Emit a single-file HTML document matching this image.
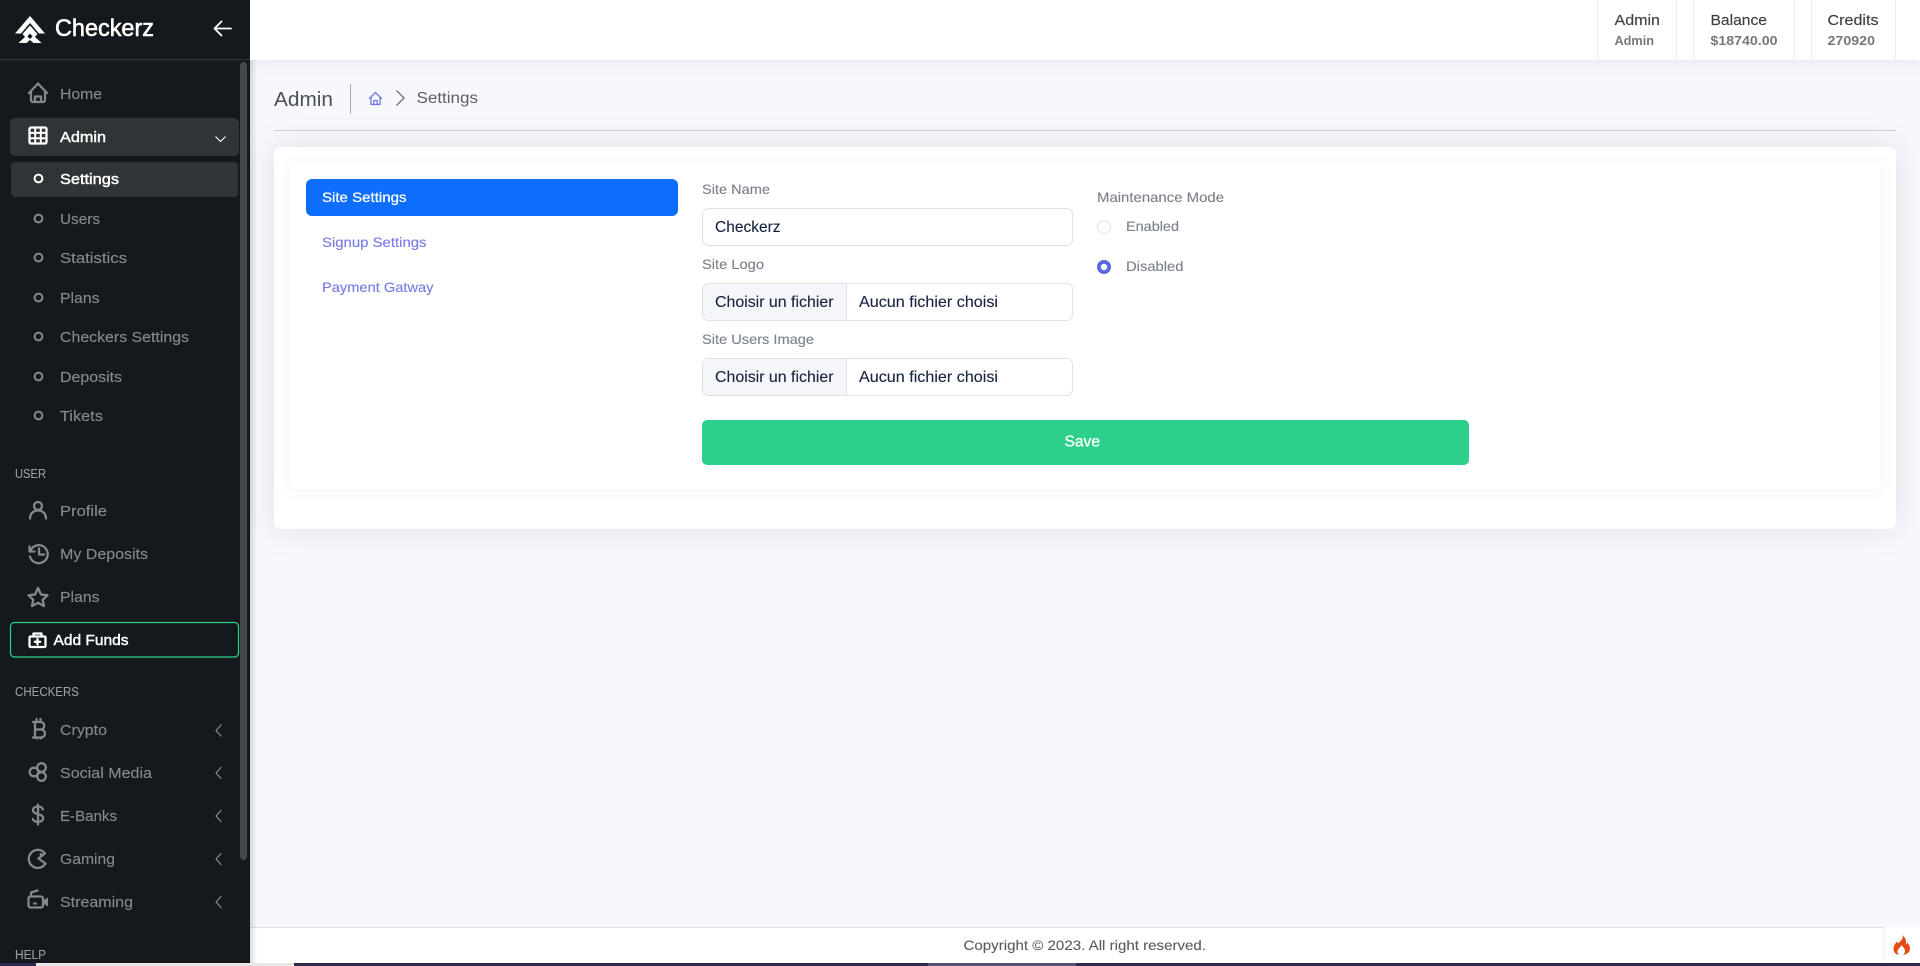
<!DOCTYPE html>
<html lang="en">
<head>
<meta charset="utf-8">
<title>Checkerz - Settings</title>
<style>
html,body{margin:0;padding:0;width:1920px;height:966px;overflow:hidden;background:#f7f8fd}
svg{display:block}
text{font-family:"Liberation Sans",sans-serif;white-space:pre}
.nav{font-size:15px;fill:#84888c;stroke:#84888c;stroke-width:.15}
.act{font-size:15px;fill:#fff;stroke:#fff;stroke-width:.45}
.sec{font-size:13px;fill:#9a9da0;stroke:#9a9da0;stroke-width:.1}
.lbl{font-size:14px;fill:#7a818a;stroke:#7a818a;stroke-width:.12}
.val{font-size:16px;fill:#17243f;stroke:#17243f;stroke-width:.12}
.tab{font-size:14px;fill:#767ae6;stroke:#767ae6;stroke-width:.12}
.hd{font-size:15px;fill:#3f3f3f;stroke:#3f3f3f;stroke-width:.15}
.sm{font-size:13px;fill:#777;font-weight:bold}
.ic{fill:none;stroke:#84888c;stroke-width:2.300;stroke-linecap:round;stroke-linejoin:round}
.wi{fill:none;stroke:#fff;stroke-width:2.300;stroke-linecap:round;stroke-linejoin:round}
.ch{fill:none;stroke:#84888c;stroke-width:1.300;stroke-linecap:round;stroke-linejoin:round}
</style>
</head>
<body>
<svg xmlns="http://www.w3.org/2000/svg" width="1920" height="966" viewBox="0 0 1920 966">
<defs>
<filter id="s1" x="-5%" y="-25%" width="110%" height="150%"><feDropShadow dx="0" dy="0" stdDeviation="16" flood-color="#1a2040" flood-opacity=".09"/></filter>
<filter id="s2" x="-5%" y="-20%" width="110%" height="140%"><feDropShadow dx="0" dy="0" stdDeviation="8" flood-color="#1a2040" flood-opacity=".05"/></filter>
<filter id="s3" x="-5%" y="-100%" width="110%" height="300%"><feDropShadow dx="0" dy="2" stdDeviation="8" flood-color="#1a2040" flood-opacity=".08"/></filter>
<linearGradient id="sd" x1="0" x2="1" y1="0" y2="0"><stop offset="0" stop-color="#000" stop-opacity=".14"/><stop offset="1" stop-color="#000" stop-opacity="0"/></linearGradient>
</defs>

<!-- page background -->
<rect width="1920" height="966" fill="#f7f8fd"/>

<!-- top bar -->
<rect x="250" y="0" width="1670" height="60" fill="#fff" filter="url(#s3)"/>
<g stroke="#eeeeee" stroke-width="1">
<path d="M1597.5 0V60M1676.5 0V60M1693.5 0V60M1794.5 0V60M1811.5 0V60M1895.5 0V60"/>
</g>
<text class="hd" x="1614.5" y="25" textLength="45.5" lengthAdjust="spacingAndGlyphs">Admin</text>
<text class="sm" x="1614.5" y="45" textLength="39.5" lengthAdjust="spacingAndGlyphs">Admin</text>
<text class="hd" x="1710.5" y="25" textLength="56.5" lengthAdjust="spacingAndGlyphs">Balance</text>
<text class="sm" x="1710.5" y="45" textLength="67" lengthAdjust="spacingAndGlyphs">$18740.00</text>
<text class="hd" x="1827.5" y="25" textLength="51" lengthAdjust="spacingAndGlyphs">Credits</text>
<text class="sm" x="1827.5" y="45" textLength="47.5" lengthAdjust="spacingAndGlyphs">270920</text>

<!-- breadcrumb -->
<text x="274" y="106" font-size="20" fill="#4a4f55" textLength="59" lengthAdjust="spacingAndGlyphs">Admin</text>
<rect x="350" y="84" width="1" height="30" fill="#b3abab"/>
<path d="M369.5 98.5L375.5 92.5L381.5 98.5M371 97.500V104.500H380V97.500M373.800 104.500V100.500H377.200V104.500" fill="none" stroke="#6f78e0" stroke-width="1.300" stroke-linejoin="round" stroke-linecap="round"/>
<path d="M396.5 90.5L404 98L396.5 105.5" fill="none" stroke="#5a5f65" stroke-width="1.200"/>
<text x="416.5" y="103" font-size="16" fill="#5a5f65" textLength="61.5" lengthAdjust="spacingAndGlyphs">Settings</text>
<rect x="274" y="130" width="1622" height="1" fill="#cfd0d6"/>

<!-- outer + inner card -->
<rect x="274" y="147" width="1622" height="382" rx="7" fill="#fff" filter="url(#s1)"/>
<rect x="290" y="163" width="1590" height="326" rx="6" fill="#fff" filter="url(#s2)"/>

<!-- tabs -->
<rect x="306" y="179" width="372" height="37" rx="6" fill="#0d6efd"/>
<text x="322" y="202" font-size="14" fill="#fff" stroke="#fff" stroke-width=".25" textLength="84.5" lengthAdjust="spacingAndGlyphs">Site Settings</text>
<text class="tab" x="322" y="247" textLength="104.5" lengthAdjust="spacingAndGlyphs">Signup Settings</text>
<text class="tab" x="322" y="292" textLength="111.5" lengthAdjust="spacingAndGlyphs">Payment Gatway</text>

<!-- form -->
<text class="lbl" x="702" y="194" textLength="68" lengthAdjust="spacingAndGlyphs">Site Name</text>
<rect x="702.5" y="208.5" width="370" height="37" rx="6" fill="#fff" stroke="#dfe2ea"/>
<text class="val" x="715" y="232" textLength="65.5" lengthAdjust="spacingAndGlyphs">Checkerz</text>

<text class="lbl" x="702" y="269" textLength="62" lengthAdjust="spacingAndGlyphs">Site Logo</text>
<path d="M846.5 283.5H708.5a6 6 0 0 0-6 6v25a6 6 0 0 0 6 6H846.5z" fill="#f5f6f9"/>
<rect x="702.5" y="283.5" width="370" height="37" rx="6" fill="none" stroke="#dfe2ea"/>
<path d="M846.5 284V320" stroke="#dfe2ea"/>
<text class="val" x="715" y="307" textLength="118.5" lengthAdjust="spacingAndGlyphs">Choisir un fichier</text>
<text class="val" x="859" y="307" textLength="139" lengthAdjust="spacingAndGlyphs">Aucun fichier choisi</text>

<text class="lbl" x="702" y="344" textLength="112" lengthAdjust="spacingAndGlyphs">Site Users Image</text>
<path d="M846.5 358.5H708.5a6 6 0 0 0-6 6v25a6 6 0 0 0 6 6H846.5z" fill="#f5f6f9"/>
<rect x="702.5" y="358.5" width="370" height="37" rx="6" fill="none" stroke="#dfe2ea"/>
<path d="M846.5 359V395" stroke="#dfe2ea"/>
<text class="val" x="715" y="382" textLength="118.5" lengthAdjust="spacingAndGlyphs">Choisir un fichier</text>
<text class="val" x="859" y="382" textLength="139" lengthAdjust="spacingAndGlyphs">Aucun fichier choisi</text>

<rect x="702" y="420" width="767" height="45" rx="5" fill="#2dd08b"/>
<text x="1064.5" y="446.5" font-size="16" fill="#fff" stroke="#fff" stroke-width=".3" textLength="35.5" lengthAdjust="spacingAndGlyphs">Save</text>

<text class="lbl" x="1097" y="202" textLength="127" lengthAdjust="spacingAndGlyphs">Maintenance Mode</text>
<circle cx="1104" cy="227" r="6.5" fill="#fff" stroke="#dfe2ea"/>
<text class="lbl" x="1126" y="231" textLength="53" lengthAdjust="spacingAndGlyphs">Enabled</text>
<circle cx="1104" cy="267" r="7" fill="#5a67e0"/>
<circle cx="1104" cy="267" r="3.200" fill="#fff"/>
<text class="lbl" x="1126" y="271" textLength="57.5" lengthAdjust="spacingAndGlyphs">Disabled</text>

<!-- footer -->
<rect x="250" y="927" width="1670" height="36" fill="#fff"/>
<rect x="250" y="927" width="1634" height="1" fill="#e2e2e2"/>
<rect x="1883" y="927" width="1" height="36" fill="#f1f1f1"/>
<text x="963.5" y="950" font-size="14" fill="#555c63" stroke="#555c63" stroke-width=".1" textLength="242.5" lengthAdjust="spacingAndGlyphs">Copyright © 2023. All right reserved.</text>
<path d="M1902.500 935C1904 939 1900 941 1898 943.500C1897.800 942.500 1897.500 942 1897 941.500C1895 944 1893.500 946 1893.500 949C1893.500 952 1895.500 954.500 1899 955C1897.500 953.500 1897 952 1897.800 950C1898.500 948.500 1900.500 947.500 1901.500 945C1903 947 1905 948.500 1905 951C1905 952.800 1904 954 1903 955C1907 954.500 1910 952 1910 948.500C1910 946 1908.500 944 1907.500 942.500C1907.200 943.500 1906.800 944 1906 944.500C1906.500 941 1905.500 937.500 1902.500 935Z" fill="#e44d12"/>

<!-- bottom strip -->
<rect x="0" y="963" width="1920" height="3" fill="#2d2a4e"/>
<rect x="36" y="963" width="258" height="3" fill="#e8e8e8"/>
<rect x="928" y="963" width="148" height="3" fill="#55536f"/>

<!-- sidebar -->
<rect x="250" y="60" width="7" height="903" fill="url(#sd)"/>
<rect x="0" y="0" width="250" height="963" fill="#13191c"/>
<rect x="0" y="59" width="250" height="1" fill="#32373a"/>
<polygon points="30,16 45,33.500 39,33.500 30,23 21,33.500 15,33.500" fill="#fff"/>
<polygon points="30,25.500 37.500,34 34,38 30,33.500 26,38 22.500,34" fill="#fff"/>
<polygon points="18.500,43 26.500,35.500 30,39 33.500,35.500 41.500,43 33.500,43 30,40 26.500,43" fill="#fff"/>
<text x="55" y="36" font-size="24" fill="#fff" stroke="#fff" stroke-width=".6" textLength="99" lengthAdjust="spacingAndGlyphs">Checkerz</text>
<path d="M231 28.500H214.500M221.500 21.500L214.500 28.500L221.500 35.500" fill="none" stroke="#fff" stroke-width="1.800" stroke-linecap="round" stroke-linejoin="round"/>

<rect x="240" y="62" width="7" height="798" rx="3.500" fill="#44484b"/>
<rect x="10" y="118" width="229" height="38" rx="5" fill="#2f3437"/>
<rect x="11" y="162" width="227" height="35" rx="4" fill="#2f3437"/>

<!-- home -->
<path class="ic" d="M29 93L38 83.500L47 93M31 91.500V100a2 2 0 0 0 2 2H43a2 2 0 0 0 2-2V91.500M35 102V96.500H41V102"/>
<text class="nav" x="60" y="99" textLength="42" lengthAdjust="spacingAndGlyphs">Home</text>

<!-- admin -->
<rect class="wi" x="29.500" y="127.500" width="17" height="16" rx="1.500"/>
<path d="M35.200 128V143M40.800 128V143M30 132.900H46M30 138.200H46" stroke="#fff" stroke-width="2"/>
<text class="act" x="60" y="142" textLength="46" lengthAdjust="spacingAndGlyphs">Admin</text>
<path d="M215.500 136.500L220.500 141.500L225.500 136.500" fill="none" stroke="#fff" stroke-width="1.100" stroke-linejoin="round"/>

<!-- submenu -->
<circle cx="38.500" cy="178.500" r="3.900" fill="none" stroke="#fff" stroke-width="2"/>
<text class="act" x="60" y="184" textLength="59" lengthAdjust="spacingAndGlyphs">Settings</text>
<g fill="none" stroke="#84888c" stroke-width="2">
<circle cx="38.500" cy="218.500" r="3.900"/>
<circle cx="38.500" cy="257.500" r="3.900"/>
<circle cx="38.500" cy="297.500" r="3.900"/>
<circle cx="38.500" cy="336.500" r="3.900"/>
<circle cx="38.500" cy="376.500" r="3.900"/>
<circle cx="38.500" cy="415.500" r="3.900"/>
</g>
<text class="nav" x="60" y="224" textLength="40" lengthAdjust="spacingAndGlyphs">Users</text>
<text class="nav" x="60" y="263" textLength="67" lengthAdjust="spacingAndGlyphs">Statistics</text>
<text class="nav" x="60" y="303" textLength="39.500" lengthAdjust="spacingAndGlyphs">Plans</text>
<text class="nav" x="60" y="342" textLength="129" lengthAdjust="spacingAndGlyphs">Checkers Settings</text>
<text class="nav" x="60" y="382" textLength="62" lengthAdjust="spacingAndGlyphs">Deposits</text>
<text class="nav" x="60" y="421" textLength="43" lengthAdjust="spacingAndGlyphs">Tikets</text>

<!-- USER -->
<text class="sec" x="15" y="478" textLength="31" lengthAdjust="spacingAndGlyphs">USER</text>
<circle class="ic" cx="38" cy="506" r="4"/>
<path class="ic" d="M30 518.500c0-5 3.500-8 8-8s8 3 8 8"/>
<text class="nav" x="60" y="516" textLength="47" lengthAdjust="spacingAndGlyphs">Profile</text>
<path class="ic" d="M31 549.500a9 9 0 1 1-1 7M29.500 546.500V551.500H34.500"/>
<path class="ic" d="M39 548.500V554.500H44"/>
<text class="nav" x="60" y="559" textLength="88" lengthAdjust="spacingAndGlyphs">My Deposits</text>
<path class="ic" d="M38 588L41 594.500L47.500 595.300L42.700 599.800L44 606L38 602.800L32 606L33.300 599.800L28.500 595.300L35 594.500z"/>
<text class="nav" x="60" y="602" textLength="39.500" lengthAdjust="spacingAndGlyphs">Plans</text>

<rect x="10.500" y="622.500" width="228" height="34.500" rx="4" fill="none" stroke="#2dd08b" stroke-width="1.200"/>
<rect class="wi" x="29.500" y="636.500" width="16" height="10.500" rx="1"/>
<path class="wi" d="M33.500 636V633.500H41.500V636M37.500 639V644.500M34.800 641.800H40.200"/>
<text class="act" x="53.500" y="645" textLength="75" lengthAdjust="spacingAndGlyphs">Add Funds</text>

<!-- CHECKERS -->
<text class="sec" x="15" y="696" textLength="64" lengthAdjust="spacingAndGlyphs">CHECKERS</text>
<path class="ic" d="M33 722H40.500a3.700 3.700 0 0 1 0 7.500H35M35 729.500H41a4 4 0 0 1 0 8H33M35 722V737.500M36.500 719V722M40.500 719V722M36.500 737.500V738.500M40.500 737.500V738.500" stroke-width="2.500"/>
<text class="nav" x="60" y="735" textLength="47" lengthAdjust="spacingAndGlyphs">Crypto</text>
<path class="ch" d="M221 725L216 730.500L221 736"/>

<g class="ic"><circle cx="34" cy="772" r="4.300"/><circle cx="41.500" cy="767.500" r="4.300"/><circle cx="41.500" cy="776.500" r="4.300"/></g>
<text class="nav" x="60" y="778" textLength="92" lengthAdjust="spacingAndGlyphs">Social Media</text>
<path class="ch" d="M221 767.500L216 773L221 778.500"/>

<path class="ic" stroke-width="2.700" d="M43 809.500c-.8-2-2.700-3-5-3c-3 0-5 1.500-5 3.800c0 2.200 2 3.100 5 3.800c3 .7 5.200 1.700 5.200 4c0 2.300-2.200 3.800-5.200 3.800c-2.500 0-4.400-1-5.200-3M38 804.500V824.500"/>
<text class="nav" x="60" y="821" textLength="57" lengthAdjust="spacingAndGlyphs">E-Banks</text>
<path class="ch" d="M221 810.500L216 816L221 821.500"/>

<path class="ic" d="M45 853.500A9 9 0 1 0 45.500 863.500L38.500 858.500z"/>
<circle cx="41" cy="854.500" r="1.500" fill="#84888c"/>
<text class="nav" x="60" y="864" textLength="55" lengthAdjust="spacingAndGlyphs">Gaming</text>
<path class="ch" d="M221 853.500L216 859L221 864.500"/>

<rect class="ic" x="28.500" y="896.500" width="14.500" height="11" rx="2"/>
<path class="ic" d="M31 896V892.500L37.500 890.500"/>
<path d="M33 903.500H37" stroke="#84888c" stroke-width="2"/>
<path d="M44 900L48 897.500V906.500L44 904z" fill="#84888c"/>
<text class="nav" x="60" y="907" textLength="73" lengthAdjust="spacingAndGlyphs">Streaming</text>
<path class="ch" d="M221 896.500L216 902L221 907.500"/>

<text class="sec" x="15" y="959" textLength="31" lengthAdjust="spacingAndGlyphs">HELP</text>
</svg>
</body>
</html>
